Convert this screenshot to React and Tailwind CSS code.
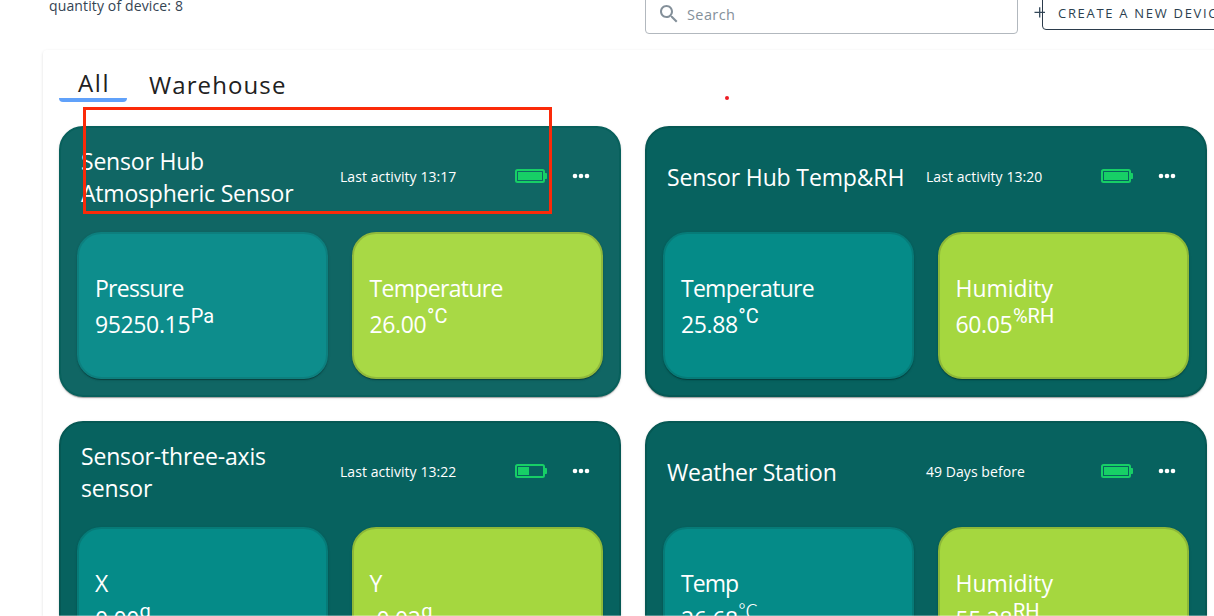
import React from "react";

const devices = [
  {
    name: ["Sensor Hub", "Atmospheric Sensor"],
    nameClass: "tracking-[-0.2px]",
    activity: "Last activity 13:17",
    battery: 20,
    hovered: true,
    readings: [
      { label: "Pressure", labelClass: "tracking-[-0.7px]", value: "95250.15", unit: "Pa" },
      { label: "Temperature", labelClass: "tracking-[-0.68px]", value: "26.00", unit: "°C" },
    ],
  },
  {
    name: ["Sensor Hub Temp&RH"],
    nameClass: "tracking-[-0.14px]",
    activity: "Last activity 13:20",
    battery: 20,
    readings: [
      { label: "Temperature", labelClass: "tracking-[-0.68px]", value: "25.88", unit: "°C" },
      { label: "Humidity", labelClass: "tracking-[-0.05px]", value: "60.05", unit: "%RH" },
    ],
  },
  {
    name: ["Sensor-three-axis", "sensor"],
    nameClass: "tracking-[-0.17px]",
    activity: "Last activity 13:22",
    battery: 9,
    readings: [
      { label: "X", labelClass: "tracking-normal", value: "0.00", unit: "g" },
      { label: "Y", labelClass: "tracking-normal", value: "-0.02", unit: "g" },
    ],
  },
  {
    name: ["Weather Station"],
    nameClass: "tracking-[-0.23px]",
    activity: "49 Days before",
    battery: 20,
    readings: [
      { label: "Temp", labelClass: "tracking-[-0.9px]", value: "26.68", unit: "℃" },
      { label: "Humidity", labelClass: "tracking-[-0.05px]", value: "55.28", unit: "RH" },
    ],
  },
];

const elevation =
  "shadow-[0_2px_1px_-1px_rgba(0,0,0,0.2),0_1px_1px_rgba(0,0,0,0.14),0_1px_3px_rgba(0,0,0,0.12)]";

function Battery({ level }) {
  return (
    <svg className="block h-4 w-8 shrink-0" viewBox="0 0 32 16">
      <rect x="1" y="2" width="28" height="12" rx="1.5" fill="none" stroke="#17cf66" strokeWidth="2" />
      <path d="M30 5h1.2q.8 0 .8 1v4q0 1-.8 1H30z" fill="#17cf66" />
      <rect x="3" y="4" width={level === 20 ? 24 : 11} height="8" fill="#17cf66" />
    </svg>
  );
}

function Tile({ reading, green, hovered }) {
  const color = green
    ? hovered
      ? "bg-[#a8d945] border-[#90b93c]"
      : "bg-[#a5d73f] border-[#8db838]"
    : hovered
      ? "bg-[#0d8d8c] border-[#0d7f7e]"
      : "bg-[#058b88] border-[#067b78]";
  const unitFont =
    reading.unit === "℃"
      ? "font-['Noto_Sans_CJK_SC',sans-serif] font-light"
      : "font-['Roboto',sans-serif]";
  return (
    <div className={`h-[147px] min-w-0 flex-1 rounded-3xl border-2 pl-[15.5px] pt-9 text-white ${color} ${elevation}`}>
      <div className={`h-9 text-[23px] leading-9 ${reading.labelClass}`}>{reading.label}</div>
      <div className="flex h-9 text-[23px] leading-9">
        <span className="tracking-[-0.35px]">{reading.value}</span>
        <span className={`-mt-2 ml-[0.5px] text-[20px] ${unitFont}`}>{reading.unit}</span>
      </div>
    </div>
  );
}

function DeviceCard({ device }) {
  return (
    <article
      className={`h-[271px] w-[562px] rounded-3xl border-2 px-[16.4px] ${elevation} ${
        device.hovered ? "border-[#08605c] bg-[#106664]" : "border-[#065854] bg-[#07625f]"
      }`}
    >
      <header className="flex h-[104px] items-center pb-1.5 pl-[3.6px] text-white">
        <h2 className={`w-[259px] shrink-0 whitespace-nowrap text-[23px] leading-8 ${device.nameClass}`}>
          {device.name.map((line) => (
            <span key={line} className="block">{line}</span>
          ))}
        </h2>
        <span className="w-[175px] text-[14px] leading-5 tracking-[0.06px]">{device.activity}</span>
        <div className="pb-0.5"><Battery level={device.battery} /></div>
        <svg className="mb-0.5 ml-[25px] block h-2 w-[18px]" viewBox="0 0 18 8" fill="currentColor">
          <circle cx="3" cy="4" r="2.3" />
          <circle cx="9" cy="4" r="2.3" />
          <circle cx="15" cy="4" r="2.3" />
        </svg>
      </header>
      <div className="flex gap-6">
        <Tile reading={device.readings[0]} hovered={device.hovered} />
        <Tile reading={device.readings[1]} hovered={device.hovered} green />
      </div>
    </article>
  );
}

export default function App() {
  return (
    <div className="relative h-[616px] w-full overflow-hidden bg-white font-['Open_Sans',sans-serif] text-[#212121]">
      <div className="flex h-[50px] items-start">
        <p className="-mt-1 w-[645px] shrink-0 pl-[49px] text-[14px] leading-5 tracking-[0.13px] text-[#344453]">
          quantity of device: 8
        </p>
        <div className="-mt-2 flex h-[42px] w-[373px] shrink-0 items-center rounded border border-[#b2b8be] pl-[11px] text-[#84909a]">
          <svg className="mt-[1px] h-6 w-6" viewBox="0 0 24 24" fill="currentColor">
            <path d="M15.5 14h-.79l-.28-.27C15.41 12.59 16 11.11 16 9.5 16 5.91 13.09 3 9.5 3S3 5.91 3 9.5 5.91 16 9.5 16c1.61 0 3.09-.59 4.23-1.57l.27.28v.79l5 4.99L20.49 19l-4.99-5zm-6 0C7.01 14 5 11.99 5 9.5S7.01 5 9.5 5 14 7.01 14 9.5 11.99 14 9.5 14z" />
          </svg>
          <span className="ml-[6px] mt-[3px] text-[14.5px] leading-5 tracking-[0.4px]">Search</span>
        </div>
        <svg className="ml-4 mt-[6px] h-3 w-3 shrink-0" viewBox="0 0 12 12" fill="none" stroke="#34495a" strokeWidth="1.3">
          <path d="M5.7 1.2v10.3M.5 6.4h10.5" />
        </svg>
        <button className="-ml-1 -mt-2 h-[38px] w-[200px] shrink-0 whitespace-nowrap rounded border border-[#2b3b4b] pl-[15px] pt-[3px] text-left text-[13px] leading-5 tracking-[1.7px] text-[#2b3f50]">
          CREATE A NEW DEVICE
        </button>
      </div>
      <main className="ml-[43px] h-[700px] w-[1220px] rounded shadow-[0_1px_3px_rgba(0,0,0,0.14)]">
        <nav className="flex h-[76px] items-start pl-4 pt-4 text-[24px] leading-8">
          <div className="h-9 w-[68px] rounded-b border-b-4 border-[#60a1fa] pl-[19px] pt-px tracking-[1.6px]">All</div>
          <div className="ml-[22px] mt-[3px] tracking-[1.1px]">Warehouse</div>
        </nav>
        <section className="grid grid-cols-[562px_562px] gap-6 pl-4">
          {devices.map((device) => (
            <DeviceCard key={device.name[0]} device={device} />
          ))}
        </section>
      </main>
      <div className="absolute left-[83px] top-[107px] h-[107px] w-[469px] border-[3px] border-[#fb2a09]" />
      <div className="absolute left-[725px] top-[96px] h-1 w-1 rounded-full bg-[#ed1c24]" />
      <div className="absolute bottom-0 left-0 h-px w-full bg-white/30" />
    </div>
  );
}
